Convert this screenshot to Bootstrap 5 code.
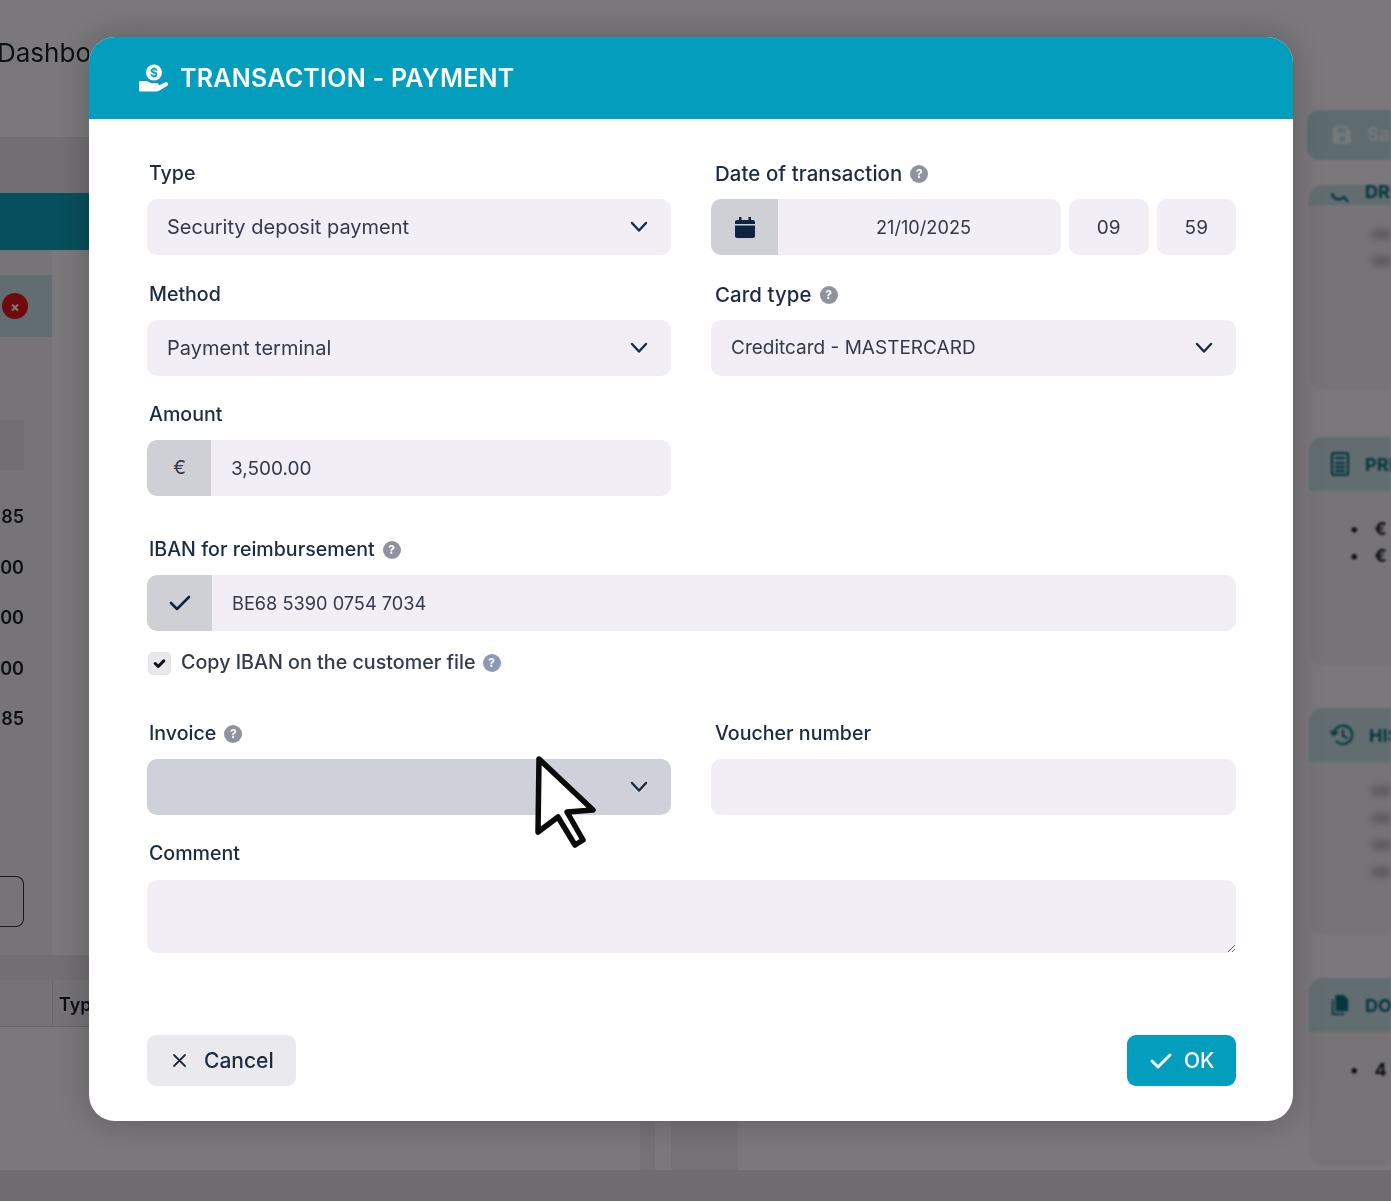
<!DOCTYPE html>
<html lang="en">

<head>
    <meta charset="UTF-8" />
    <meta name="viewport" content="width=device-width, initial-scale=1.0" />
    <title>Transaction - Payment</title>
    <link href="https://cdn.jsdelivr.net/npm/bootstrap@5.3.0/dist/css/bootstrap.min.css" rel="stylesheet" />
    <style>
        body {
            font-family: "Inter", "Liberation Sans", sans-serif;
            background-color: #f6f1f8;
            color: #1d2b3f;
            overflow: hidden;
        }

        /* page behind the modal */
        .page-back {
            height: 1201px;
            overflow: hidden;
        }

        .page-top {
            height: 1170px;
            filter: blur(.6px);
        }

        .page-bottom {
            height: 31px;
            background-color: #dcd8de;
        }

        .back-left {
            width: 89px;
            height: 1170px;
            overflow: hidden;
        }

        .back-middle {
            flex: 1 1 auto;
            height: 1170px;
            padding-left: 551px;
            gap: 16px;
        }

        .back-middle div {
            height: 50px;
            background-color: #e8e4ea;
        }

        .back-title {
            height: 137px;
            padding-top: 33px;
            margin-left: -3px;
            font-size: 26px;
            color: #17202c;
            white-space: nowrap;
        }

        .back-band {
            height: 56px;
            background-color: #e4dfe6;
        }

        .back-teal {
            height: 57px;
            background-color: #0f9fb8;
        }

        .back-panel {
            width: 52px;
            height: 705px;
            padding-top: 25px;
            background-color: #ece8ee;
        }

        .back-status {
            height: 62px;
            background-color: #c3dbe2;
            padding-left: 2px;
        }

        .back-x {
            width: 26px;
            height: 26px;
            border-radius: 50%;
            background-color: #e0141c;
            color: #fff;
            font-size: 14px;
            font-weight: 700;
        }

        .back-grey {
            width: 24px;
            height: 50px;
            margin-top: 83px;
            margin-bottom: 22px;
            background-color: #e0dce2;
        }

        .back-num {
            width: 24px;
            height: 50.5px;
            line-height: 50.5px;
            font-size: 18px;
            font-weight: 600;
            text-align: right;
            color: #17202c;
        }

        .back-outline {
            width: 24px;
            height: 51px;
            margin-top: 131px;
            border: 1px solid #333;
            border-left: 0;
            border-radius: 0 8px 8px 0;
        }

        .back-strip {
            height: 25px;
            background-color: #e4dfe6;
        }

        .back-head {
            height: 47px;
            background-color: #eae6ec;
            border-bottom: 1px solid #ccc8ce;
            padding-left: 52px;
        }

        .back-head span {
            display: block;
            height: 46px;
            line-height: 50px;
            border-left: 1px solid #d0ccd2;
            padding-left: 6px;
            font-size: 18px;
            font-weight: 600;
            color: #17202c;
        }

        .back-right {
            flex: 0 0 84px;
            width: 84px;
            height: 1170px;
            overflow: hidden;
            white-space: nowrap;
            filter: blur(1px);
        }

        .back-save {
            height: 50px;
            margin-top: 110px;
            gap: 15px;
            padding-left: 25px;
            border-radius: 12px 0 0 12px;
            background-color: #bcd9e0;
            color: #eaf3f5;
            font-size: 19px;
            font-weight: 600;
        }

        .back-card {
            margin-left: 2px;
            border-radius: 14px 0 0 14px;
            background-color: #ece8ee;
            overflow: hidden;
        }

        .back-card-head {
            height: 54px;
            background-color: #c3dbe2;
            color: #0c6b7d;
            font-size: 18px;
            font-weight: 700;
            padding-left: 21px;
            gap: 15px;
        }

        .back-card-head svg,
        .back-save svg {
            flex: 0 0 auto;
        }

        .back-card-body {
            padding: 24px 0 0 41px;
            font-size: 18px;
            font-weight: 700;
            color: #17202c;
        }

        .back-item {
            height: 27px;
            gap: 16px;
        }

        .back-smear {
            height: 10px;
            margin: 0 0 17px 22px;
            background-color: #b9b6bc;
            filter: blur(3px);
        }

        .card-draft {
            height: 205px;
            margin-top: 25px;
        }

        .card-draft .back-card-head {
            height: 20px;
        }

        .card-price {
            height: 228px;
            margin-top: 47px;
        }

        .card-history {
            height: 227px;
            margin-top: 43px;
        }

        .card-docs {
            height: 187px;
            margin-top: 43px;
        }

        /* the dialog */
        .pay-dialog {
            max-width: 1204px;
            margin: 37px 0 0 89px;
        }

        .pay-content {
            height: 1084px;
            border: 0;
            border-radius: 26px;
            overflow: hidden;
            box-shadow: 0 0 34px rgba(0, 0, 0, .25);
        }

        .pay-header {
            height: 82px;
            padding: 2px 0 0 49px;
            border: 0;
            border-radius: 0;
            background-color: #039dbd;
            color: #fff;
            gap: 10px;
        }

        .pay-header svg {
            margin-top: -2px;
        }

        .pay-header h5 {
            margin: 0;
            font-size: 25px;
            font-weight: 600;
            letter-spacing: .25px;
        }

        .pay-body {
            padding: 0 57px 0 58px;
            flex: 1 1 auto;
        }

        .field-row {
            display: flex;
            gap: 40px;
            height: 120px;
            padding-top: 40px;
        }

        .field-row.row-first {
            height: 121px;
        }

        .field-cell {
            flex: 1 1 0;
            min-width: 0;
        }

        .field-cell:first-child {
            flex: 0 0 524px;
        }

        .field-label {
            display: flex;
            align-items: center;
            gap: 8px;
            height: 30px;
            margin: 0 0 10px 2px;
            font-size: 19.6px;
            font-weight: 500;
            color: #1d2b3f;
        }

        .field-cell + .field-cell .field-label {
            margin-left: 4px;
        }

        .label-wide {
            font-size: 20.4px;
            letter-spacing: .1px;
        }

        .label-comment {
            margin-top: 24px;
            margin-bottom: 11px;
        }

        .hint-dot {
            display: inline-flex;
            align-items: center;
            justify-content: center;
            width: 18px;
            height: 18px;
            border-radius: 50%;
            background-color: #8f939d;
            color: #fff;
            font-size: 12px;
            font-weight: 700;
        }

        .hint-blue {
            margin-left: -3px;
            background-color: #8b9ab4;
        }

        .pay-select,
        .pay-input {
            height: 56px;
            padding-left: 20px;
            border: 0;
            border-radius: 10px;
            background-color: #f1eef5;
            color: #333a4b;
            font-size: 19px;
        }

        .pay-select {
            padding-right: 50px;
            background-image: url("data:image/svg+xml,%3csvg xmlns='http://www.w3.org/2000/svg' viewBox='0 0 18 12'%3e%3cpath fill='none' stroke='%231d2b3f' stroke-linecap='round' stroke-linejoin='round' stroke-width='2.4' d='m2 2 7 7.500L16 2'/%3e%3c/svg%3e");
            background-position: right 23px center;
            background-size: 18px 12px;
        }

        .text-wide {
            font-size: 20px;
        }

        .text-tight {
            font-size: 18.2px;
        }

        .pay-grey {
            background-color: #ced1d9;
        }

        .pay-addon {
            justify-content: center;
            height: 56px;
            padding: 0;
            border: 0;
            border-radius: 10px;
            background-color: #cfd0d6;
            color: #333a4b;
            font-size: 19px;
        }

        .addon-date {
            width: 68px;
        }

        .addon-eur {
            width: 65px;
        }

        .addon-iban {
            width: 66px;
        }

        .date-box {
            flex: 0 0 350px;
            width: 350px;
        }

        .time-box {
            flex: 1 1 0;
            min-width: 0;
            padding: 0;
            text-align: center;
        }

        .field-row.iban-row {
            height: auto;
            padding-top: 55px;
        }

        .copy-check {
            display: flex;
            align-items: center;
            gap: 10px;
            height: 24px;
            margin: 20px 0 0 1px;
            padding: 0;
            font-size: 19.7px;
            font-weight: 500;
            color: #333a4b;
        }

        .copy-check .form-check-input {
            float: none;
            width: 23px;
            height: 23px;
            margin: 0;
            border: 1px solid #e2e2e6;
            border-radius: 5px;
            background-color: #e9e8ed;
            background-size: 17px;
            background-image: url("data:image/svg+xml,%3csvg xmlns='http://www.w3.org/2000/svg' viewBox='0 0 20 20'%3e%3cpath fill='none' stroke='%23111' stroke-linecap='round' stroke-linejoin='round' stroke-width='3.6' d='m5 10 3.500 3.500L15 7'/%3e%3c/svg%3e");
        }

        .field-row.invoice-row {
            height: auto;
            margin-top: 44px;
            padding-top: 0;
        }

        .note-box {
            height: 73px;
            min-height: 40px;
        }

        .pay-footer {
            justify-content: space-between;
            padding: 0 57px 35px 58px;
            border: 0;
            border-radius: 0;
        }

        .pay-btn {
            display: inline-flex;
            align-items: center;
            height: 51px;
            margin: 0;
            border: 0;
            border-radius: 9px;
            font-size: 21px;
            font-weight: 500;
        }

        .btn-cancel {
            gap: 17px;
            width: 149px;
            padding: 0 0 0 25px;
            background-color: #e9e9ee;
            color: #1d2b3f;
        }

        .btn-ok {
            gap: 12px;
            width: 109px;
            padding: 0 0 0 23px;
            background-color: #039dbd;
            color: #fff;
        }

        .mouse-arrow {
            position: fixed;
            left: 533px;
            top: 753px;
            z-index: 1060;
        }
    </style>
</head>

<body>
    <div class="page-back">
        <div class="page-top d-flex">
            <div class="back-left">
                <div class="back-title">Dashboard</div>
                <div class="back-band"></div>
                <div class="back-teal"></div>
                <div class="back-panel">
                    <div class="back-status d-flex align-items-center">
                        <span class="back-x d-flex align-items-center justify-content-center">×</span>
                    </div>
                    <div class="back-grey"></div>
                    <div class="back-num">85</div>
                    <div class="back-num">00</div>
                    <div class="back-num">00</div>
                    <div class="back-num">00</div>
                    <div class="back-num">85</div>
                    <div class="back-outline"></div>
                </div>
                <div class="back-strip"></div>
                <div class="back-head"><span>Type</span></div>
            </div>

            <div class="back-middle d-flex align-items-end">
                <div class="flex-shrink-0" style="width: 15px;"></div>
                <div class="flex-shrink-0" style="width: 67px;"></div>
            </div>

            <div class="back-right">
                <div class="back-save d-flex align-items-center">
                    <svg width="20" height="20" viewBox="0 0 20 20" fill="#eaf3f5">
                        <path d="M3 1h11l5 5v11a2 2 0 0 1-2 2H3a2 2 0 0 1-2-2V3a2 2 0 0 1 2-2zm2 2v5h8V3zm5 8a3 3 0 1 0 0 6 3 3 0 0 0 0-6z" />
                    </svg>
                    <span>Save</span>
                </div>
                <div class="back-card card-draft">
                    <div class="back-card-head d-flex align-items-end">
                        <svg width="20" height="12" viewBox="0 0 20 12" fill="none" stroke="#0c6b7d" stroke-width="2.400">
                            <path d="M2 0a7 7 0 0 0 12 4l4 5" />
                        </svg>
                        <span>DRAFT</span>
                    </div>
                    <div class="back-card-body">
                        <div class="back-smear"></div>
                        <div class="back-smear"></div>
                    </div>
                </div>
                <div class="back-card card-price">
                    <div class="back-card-head d-flex align-items-center">
                        <svg width="20" height="24" viewBox="0 0 20 24">
                            <rect x="2" y="1" width="16" height="22" rx="2" fill="none" stroke="#0c6b7d" stroke-width="2.400" />
                            <path d="M5 6h10M5 11h10M5 15h10M5 19h10" stroke="#0c6b7d" stroke-width="2.400" />
                        </svg>
                        <span>PRICE</span>
                    </div>
                    <div class="back-card-body">
                        <div class="back-item d-flex"><span>•</span><span>€ 3,500</span></div>
                        <div class="back-item d-flex"><span>•</span><span>€ 1,200</span></div>
                    </div>
                </div>
                <div class="back-card card-history">
                    <div class="back-card-head d-flex align-items-center">
                        <svg width="24" height="24" viewBox="0 0 26 24" fill="none" stroke="#0c6b7d" stroke-width="2.400" stroke-linecap="round" class="me-n1">
                            <path d="M4 12a10 10 0 1 1 3 7M1 8l3 4 4-3M14 7v6l4 2" />
                        </svg>
                        <span>HISTORY</span>
                    </div>
                    <div class="back-card-body">
                        <div class="back-smear"></div>
                        <div class="back-smear"></div>
                        <div class="back-smear"></div>
                        <div class="back-smear"></div>
                    </div>
                </div>
                <div class="back-card card-docs">
                    <div class="back-card-head d-flex align-items-center">
                        <svg width="20" height="24" viewBox="0 0 22 24" fill="#0c6b7d">
                            <path d="M6 1h9l5 5v13H6z" />
                            <path d="M2 6h2v15h12v2H2z" />
                        </svg>
                        <span>DOCS</span>
                    </div>
                    <div class="back-card-body">
                        <div class="back-item d-flex"><span>•</span><span>4 Items</span></div>
                    </div>
                </div>
            </div>
        </div>
        <div class="page-bottom"></div>
    </div>

    <div class="modal-backdrop fade show"></div>

    <div class="modal d-block">
        <div class="modal-dialog pay-dialog">
            <div class="modal-content pay-content">
                <div class="modal-header pay-header justify-content-start">
                    <svg width="32" height="28" viewBox="0 0 32 28">
                        <circle cx="16" cy="8.500" r="8" fill="#fff" />
                        <text x="16" y="13" text-anchor="middle" font-size="12" font-weight="700" fill="#039dbd" font-family="Inter, sans-serif">$</text>
                        <path fill="#fff" d="M1 18.500c0-.8.600-1.500 1.400-1.500H7c1.600 0 3 .4 4.400 1.200l1.800 1H19c1.100 0 1.900.8 1.900 1.700 0 .3-.1.500-.2.700l6.300-3.100c1-.5 2.300-.2 2.900.7.600.9.300 2-.6 2.600l-8.300 5c-.9.500-1.900.8-3 .8H2.400c-.8 0-1.400-.6-1.400-1.400z" />
                    </svg>
                    <h5 class="modal-title">TRANSACTION - PAYMENT</h5>
                </div>

                <div class="modal-body pay-body">
                    <div class="field-row row-first">
                        <div class="field-cell">
                            <label class="field-label">Type</label>
                            <select class="form-select pay-select text-wide">
                                <option>Security deposit payment</option>
                            </select>
                        </div>
                        <div class="field-cell">
                            <label class="field-label label-wide">Date of transaction <span class="hint-dot">?</span></label>
                            <div class="d-flex gap-2">
                                <div class="input-group date-box">
                                    <span class="input-group-text pay-addon addon-date">
                                        <svg width="20" height="21" viewBox="0 0 20 21" fill="#0c2440">
                                            <path d="M4 0h2.500v3h7V0H16v3h2c1.100 0 2 .9 2 2v2H0V5c0-1.100.9-2 2-2h2zM0 8.500h20V19c0 1.100-.9 2-2 2H2c-1.100 0-2-.9-2-2z" />
                                        </svg>
                                    </span>
                                    <input type="text" class="form-control pay-input text-tight text-center" value="21/10/2025">
                                </div>
                                <input type="text" class="form-control pay-input time-box" value="09">
                                <input type="text" class="form-control pay-input time-box" value="59">
                            </div>
                        </div>
                    </div>

                    <div class="field-row">
                        <div class="field-cell">
                            <label class="field-label">Method</label>
                            <select class="form-select pay-select text-wide">
                                <option>Payment terminal</option>
                            </select>
                        </div>
                        <div class="field-cell">
                            <label class="field-label label-wide">Card type <span class="hint-dot">?</span></label>
                            <select class="form-select pay-select">
                                <option>Creditcard - MASTERCARD</option>
                            </select>
                        </div>
                    </div>

                    <div class="field-row">
                        <div class="field-cell">
                            <label class="field-label">Amount</label>
                            <div class="input-group">
                                <span class="input-group-text pay-addon addon-eur">€</span>
                                <input type="text" class="form-control pay-input" value="3,500.00">
                            </div>
                        </div>
                    </div>

                    <div class="field-row iban-row">
                        <div class="w-100">
                            <label class="field-label">IBAN for reimbursement <span class="hint-dot">?</span></label>
                            <div class="input-group">
                                <span class="input-group-text pay-addon addon-iban">
                                    <svg width="22" height="16" viewBox="0 0 22 16" fill="none" stroke="#0c2440" stroke-width="2.600" stroke-linecap="round" stroke-linejoin="round">
                                        <path d="m2 8 6 6L20 2" />
                                    </svg>
                                </span>
                                <input type="text" class="form-control pay-input text-tight" value="BE68 5390 0754 7034">
                            </div>
                        </div>
                    </div>

                    <div class="form-check copy-check">
                        <input class="form-check-input" type="checkbox" id="copyIban" checked>
                        <label for="copyIban">Copy IBAN on the customer file</label>
                        <span class="hint-dot hint-blue">?</span>
                    </div>

                    <div class="field-row invoice-row">
                        <div class="field-cell">
                            <label class="field-label">Invoice <span class="hint-dot">?</span></label>
                            <select class="form-select pay-select pay-grey">
                                <option></option>
                            </select>
                        </div>
                        <div class="field-cell">
                            <label class="field-label">Voucher number</label>
                            <input type="text" class="form-control pay-input">
                        </div>
                    </div>

                    <label class="field-label label-comment">Comment</label>
                    <textarea class="form-control pay-input note-box"></textarea>
                </div>

                <div class="modal-footer pay-footer">
                    <button type="button" class="btn pay-btn btn-cancel">
                        <svg width="15" height="15" viewBox="0 0 15 15" stroke="#1d2b3f" stroke-width="1.800" stroke-linecap="round">
                            <path d="m2 2 11 11M13 2 2 13" />
                        </svg>
                        Cancel
                    </button>
                    <button type="button" class="btn pay-btn btn-ok">
                        <svg width="22" height="16" viewBox="0 0 22 16" fill="none" stroke="#fff" stroke-width="3" stroke-linecap="round" stroke-linejoin="round">
                            <path d="m2 8 6 6L20 2" />
                        </svg>
                        OK
                    </button>
                </div>
            </div>
        </div>
    </div>

    <svg class="mouse-arrow" width="68" height="100" viewBox="0 0 68 100">
        <path d="M6 6 60 57 34 59 50 87 42 92 25 64 5 79z" fill="#fff" stroke="#0a0a0a" stroke-width="5.500" stroke-linejoin="round" />
    </svg>

    <script src="https://cdn.jsdelivr.net/npm/bootstrap@5.3.0/dist/js/bootstrap.bundle.min.js"></script>
</body>

</html>
